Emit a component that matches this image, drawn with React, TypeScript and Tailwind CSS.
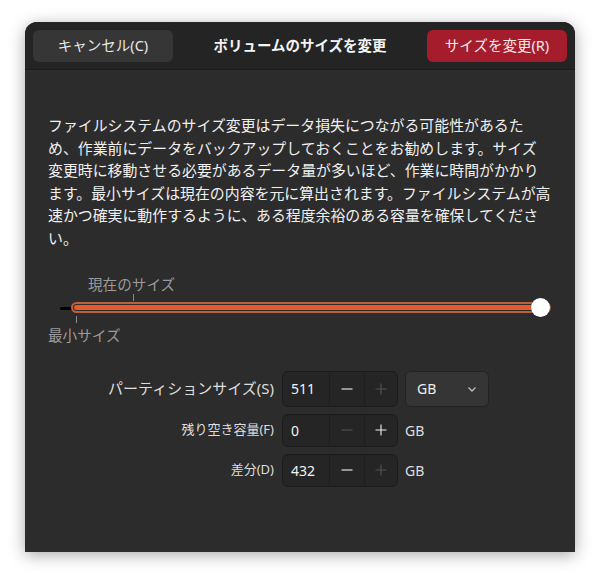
import React from 'react'

const font = { fontFamily: '"Noto Sans", "Noto Sans CJK JP", sans-serif' }

// 細い線のマイナス・プラスアイコン
function MinusIcon() {
  return (
    <svg width="14" height="14" viewBox="0 0 14 14">
      <path d="M1.5 7h11" stroke="currentColor" strokeWidth="1.1" />
    </svg>
  )
}

function PlusIcon() {
  return (
    <svg width="14" height="14" viewBox="0 0 14 14">
      <path d="M1.5 7h11M7 1.5v11" stroke="currentColor" strokeWidth="1.1" />
    </svg>
  )
}

function Chevron() {
  return (
    <svg width="12" height="12" viewBox="0 0 12 12">
      <path d="M2.5 4.5 6 8l3.5-3.5" fill="none" stroke="#bdbdbd" strokeWidth="1.3" />
    </svg>
  )
}

type SpinProps = {
  value: string
  minus: boolean
  plus: boolean
  tall?: boolean
}

function Spin({ value, minus, plus, tall }: SpinProps) {
  return (
    <div
      className={`flex w-[116px] ${tall ? 'h-[36px]' : 'h-[33px]'} rounded-[6px] border border-[#1b1b1b] bg-[#252525] text-[14px] text-[#f2f2f2]`}
    >
      <div className="flex w-[46px] items-center pl-[8px]">{value}</div>
      <div
        className={`flex w-[35px] items-center justify-center border-l border-[#1e1e1e] ${minus ? 'text-[#f0f0f0]' : 'text-[#555555]'}`}
      >
        <MinusIcon />
      </div>
      <div
        className={`flex flex-1 items-center justify-center border-l border-[#1e1e1e] ${plus ? 'text-[#f0f0f0]' : 'text-[#555555]'}`}
      >
        <PlusIcon />
      </div>
    </div>
  )
}

export default function App() {
  return (
    <div className="h-[580px] w-[600px] bg-white px-[25px] pt-[22px]" style={font}>
      <div className="flex h-[530px] w-[550px] flex-col overflow-hidden rounded-t-[12px] bg-[#2c2c2c] shadow-[0_3px_16px_rgba(0,0,0,0.35)]">
        {/* ヘッダーバー */}
        <div className="flex h-[48px] shrink-0 items-center justify-between border-b border-[#1c1c1c] bg-[#242424] px-[8px]">
          <button className="h-[32px] w-[140px] rounded-[6px] bg-[#363636] text-[14.5px] text-[#e8e8e8]">
            キャンセル(C)
          </button>
          <div className="text-[14.5px] font-bold text-[#f4f4f4]">ボリュームのサイズを変更</div>
          <button className="h-[32px] w-[140px] rounded-[6px] bg-[#a51d2d] text-[14.5px] text-[#f4e8ea]">
            サイズを変更(R)
          </button>
        </div>

        {/* 本文 */}
        <div className="flex flex-col px-[23px] pt-[44px]">
          <p className="text-[14.9px] leading-[22.6px] text-[#f0f0f0]">
            ファイルシステムのサイズ変更はデータ損失につながる可能性があるた
            <br />
            め、作業前にデータをバックアップしておくことをお勧めします。サイズ
            <br />
            変更時に移動させる必要があるデータ量が多いほど、作業に時間がかかり
            <br />
            ます。最小サイズは現在の内容を元に算出されます。ファイルシステムが高
            <br />
            速かつ確実に動作するように、ある程度余裕のある容量を確保してくださ
            <br />
            い。
          </p>

          {/* スライダー */}
          <div className="relative mt-[25px] h-[72px] text-[14.6px] text-[#9b9b9b]">
            <span className="absolute left-[40px] top-[0px] leading-[18px]">現在のサイズ</span>
            <div className="absolute left-[85px] top-[19px] h-[7px] w-px bg-[#8a8a8a]" />
            <div className="absolute left-[12px] top-[32px] h-[3px] w-[14px] rounded-full bg-black" />
            <div className="absolute left-[23px] top-[27px] h-[11px] w-[480px] rounded-full border-[2px] border-[#b8613f] bg-[#2c2c2c] p-[1px]">
              <div className="h-full w-full rounded-full bg-[#e95a2a]" />
            </div>
            <div className="absolute left-[483px] top-[23px] h-[19px] w-[19px] rounded-full bg-white shadow-[0_0_1px_rgba(0,0,0,0.6)]" />
            <div className="absolute left-[28px] top-[41px] h-[7px] w-px bg-[#8a8a8a]" />
            <span className="absolute left-[0px] top-[51px] leading-[18px]">最小サイズ</span>
          </div>

          {/* サイズ入力 */}
          <div className="mt-[24px] grid grid-cols-[227px_auto_auto] items-center justify-start gap-x-[7px] gap-y-[7px]">
            <div className="pr-[1px] text-right text-[15px] text-[#dedede]">パーティションサイズ(S)</div>
            <Spin value="511" minus plus={false} tall />
            <div className="flex h-[36px] w-[84px] items-center justify-between rounded-[6px] border border-[#232323] bg-[#353535] pl-[11px] pr-[10px] text-[14px] text-[#eeeeee]">
              <span>GB</span>
              <Chevron />
            </div>

            <div className="pr-[1px] text-right text-[13px] text-[#dedede]">残り空き容量(F)</div>
            <Spin value="0" minus={false} plus />
            <div className="text-[14px] text-[#dedede]">GB</div>

            <div className="pr-[1px] text-right text-[13px] text-[#dedede]">差分(D)</div>
            <Spin value="432" minus plus={false} />
            <div className="text-[14px] text-[#dedede]">GB</div>
          </div>
        </div>
      </div>
    </div>
  )
}
